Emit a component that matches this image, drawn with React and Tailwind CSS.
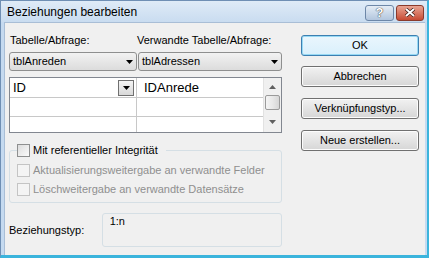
import React from 'react'

const font = { fontFamily: '"Liberation Sans", Arial, sans-serif' }

const Arrow = ({ className = '' }) => (
    <svg width="7" height="4" viewBox="0 0 7 4" className={className}>
        <path d="M0 0 H7 L3.5 4 Z" fill="#000" />
    </svg>
)

const Checkbox = ({ disabled }) => (
    <span
        className={
            'inline-block w-[13px] h-[13px] shrink-0 border ' +
            (disabled
                ? 'border-[#c4c4c4] bg-[#f4f4f4]'
                : 'border-[#8e8f8f] bg-gradient-to-br from-[#dcdcdc] to-[#fbfbfb]')
        }
    />
)

const Combo = ({ label, className }) => (
    <div className={'h-[19px] flex items-center justify-between pl-[3px] pr-[3px] border border-[#8e8f8f] rounded-[3px] bg-gradient-to-b from-[#f2f2f2] to-[#dcdcdc] ' + className}>
        <span className="text-[11px] leading-[13px] text-black">{label}</span>
        <Arrow />
    </div>
)

const Button = ({ children, isDefault }) => (
    <div
        className={
            'h-[21px] w-[118px] flex items-center justify-center rounded-[3px] border text-[11px] text-black ' +
            (isDefault
                ? 'border-[#3c7fb1] bg-gradient-to-b from-[#eaf6fd] to-[#d9f0fc] shadow-[inset_0_0_0_1px_#97d9f4]'
                : 'border-[#707070] bg-gradient-to-b from-[#f2f2f2] to-[#d6d6d6] shadow-[inset_0_0_0_1px_#fcfcfc]')
        }
    >
        {children}
    </div>
)

const App = () => {
    return (
        <div style={font} className="w-[429px] h-[258px] flex flex-col bg-[#c5daf0] border-l border-t border-[#6f8fb4] border-r-2 border-b-[3px] border-r-[#3bb4dc] border-b-[#3bb4dc] overflow-hidden">
            {/* title bar */}
            <div className="h-[21px] shrink-0 flex items-center justify-between pl-[6px] pr-[3px] bg-gradient-to-b from-[#dfebf7] to-[#c9dcf0]">
                <span className="text-[12px] text-black">Beziehungen bearbeiten</span>
                <div className="flex gap-[2px] mt-[2px]">
                    <div className="w-[29px] h-[16px] rounded-[3px] border border-[#6d87a8] bg-gradient-to-b from-[#e4ecf5] to-[#b2c6de] flex items-center justify-center">
                        <span className="text-[13px] font-bold leading-none text-white [text-shadow:0_0_1px_#333,0_0_1px_#333]">?</span>
                    </div>
                    <div className="w-[28px] h-[16px] rounded-[3px] border border-[#8a3a2c] bg-gradient-to-b from-[#e8a493] to-[#c64a33] flex items-center justify-center">
                        <svg width="12" height="9" viewBox="0 0 12 9">
                            <path d="M2 1 L10 8 M10 1 L2 8" stroke="#3a1a14" strokeWidth="3.4" />
                            <path d="M2 1 L10 8 M10 1 L2 8" stroke="#fff" strokeWidth="2" />
                        </svg>
                    </div>
                </div>
            </div>

            {/* client area */}
            <div className="ml-[3px] mr-[2px] flex-1 bg-[#f0f0f0] border-l border-t border-[#a9bed6] flex pl-[4px] text-[11px] leading-[13px] text-black">
                <div className="w-[273px] flex flex-col">
                    <div className="mt-[11px] h-[13px] flex">
                        <span className="w-[128px] pl-[1px]">Tabelle/Abfrage:</span>
                        <span>Verwandte Tabelle/Abfrage:</span>
                    </div>
                    <div className="mt-[5px] flex">
                        <Combo label="tblAnreden" className="w-[128px]" />
                        <Combo label="tblAdressen" className="w-[144px] ml-[1px]" />
                    </div>

                    {/* field grid */}
                    <div className="mt-[6px] h-[56px] border border-[#828790] bg-white flex">
                        <div className="w-[127px] border-r border-[#c8c8c8] flex flex-col">
                            <div className="h-[20px] border-b border-[#c8c8c8] flex items-center justify-between pl-[3px] pr-[2px]">
                                <span className="text-[13px]">ID</span>
                                <div className="w-[16px] h-[16px] border border-[#707070] bg-gradient-to-b from-[#f4f4f4] to-[#d8d8d8] flex items-center justify-center">
                                    <Arrow />
                                </div>
                            </div>
                            <div className="h-[19px] border-b border-[#c8c8c8]" />
                            <div className="flex-1" />
                        </div>
                        <div className="flex-1 flex flex-col">
                            <div className="h-[20px] border-b border-[#c8c8c8] flex items-center pl-[7px]">
                                <span className="text-[13px]">IDAnrede</span>
                            </div>
                            <div className="h-[19px] border-b border-[#c8c8c8]" />
                            <div className="flex-1" />
                        </div>
                        <div className="w-[18px] bg-[#f0f0f0] border-l border-[#e2e2e2] flex flex-col items-center">
                            <svg width="7" height="4" viewBox="0 0 7 4" className="mt-[7px]">
                                <path d="M0 4 H7 L3.5 0 Z" fill="#606060" />
                            </svg>
                            <div className="mt-[6px] w-[15px] h-[15px] rounded-[2px] border border-[#9a9a9a] bg-gradient-to-r from-[#f4f4f4] via-[#e8e8e8] to-[#d6d6d6]" />
                            <svg width="7" height="4" viewBox="0 0 7 4" className="mt-[10px]">
                                <path d="M0 0 H7 L3.5 4 Z" fill="#606060" />
                            </svg>
                        </div>
                    </div>

                    {/* referential integrity group */}
                    <fieldset className="mt-[11px] h-[59px] border border-[#d5dfe5] rounded-[3px] pl-[7px]">
                        <legend className="pr-[8px] flex items-center gap-[3px]">
                            <Checkbox />
                            <span>Mit referentieller Integrität</span>
                        </legend>
                        <div className="mt-[4px] h-[19px] flex items-center gap-[3px] text-[#8f8f8f]">
                            <Checkbox disabled />
                            <span>Aktualisierungsweitergabe an verwandte Felder</span>
                        </div>
                        <div className="h-[19px] flex items-center gap-[3px] text-[#8f8f8f]">
                            <Checkbox disabled />
                            <span>Löschweitergabe an verwandte Datensätze</span>
                        </div>
                    </fieldset>

                    <div className="mt-[10px] flex items-center">
                        <span className="w-[93px]">Beziehungstyp:</span>
                        <div className="w-[181px] h-[34px] border border-[#d5dfe5] rounded-[3px] pl-[7px] pt-[1px]">
                            1:n
                        </div>
                    </div>
                </div>

                {/* buttons */}
                <div className="ml-[19px] flex flex-col">
                    <div className="mt-[12px]">
                        <Button isDefault>OK</Button>
                    </div>
                    <div className="mt-[10px]">
                        <Button>Abbrechen</Button>
                    </div>
                    <div className="mt-[11px]">
                        <Button>Verknüpfungstyp...</Button>
                    </div>
                    <div className="mt-[11px]">
                        <Button>Neue erstellen...</Button>
                    </div>
                </div>
            </div>
        </div>
    )
}

export default App
